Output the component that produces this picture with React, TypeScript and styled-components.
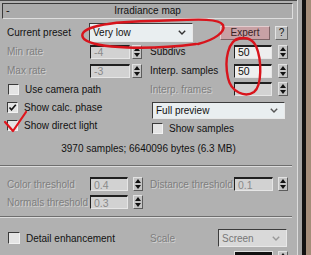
import styled, { createGlobalStyle } from "styled-components";

const Global = createGlobalStyle`
  html, body {
    margin: 0;
    padding: 0;
    background: #b1b1b1;
    overflow: hidden;
  }
  body {
    font-family: "Liberation Sans", Arial, sans-serif;
    font-size: 10px;
    color: #111;
  }
`;

function Chevron({ color = "#333" }: { color?: string }) {
  return (
    <svg width="8" height="5" viewBox="0 0 8 5">
      <polyline points="0.8,0.8 4,4 7.2,0.8" fill="none" stroke={color} strokeWidth="1.4" />
    </svg>
  );
}

function Spin({ gap }: { gap: number }) {
  return (
    <Spinner style={{ marginLeft: gap }}>
      <SpinHalf>
        <svg width="6" height="4" viewBox="0 0 6 4">
          <polygon points="3,0 6,4 0,4" fill="#111" />
        </svg>
      </SpinHalf>
      <SpinHalf>
        <svg width="6" height="4" viewBox="0 0 6 4">
          <polygon points="0,0 6,0 3,4" fill="#111" />
        </svg>
      </SpinHalf>
    </Spinner>
  );
}

function App() {
  return (
    <Screen>
      <Global />
      <Panel>
        <Header>
          <Minus>-</Minus>
          <Title>Irradiance map</Title>
        </Header>

        <PresetRow>
          <Label $w={82}>Current preset</Label>
          <Select $w={104} $h={19}>
            <span>Very low</span>
            <Chevron />
          </Select>
          <ExpertBtn>Expert</ExpertBtn>
          <HelpBtn>?</HelpBtn>
        </PresetRow>

        <Columns>
          <LeftCol>
            <Row $h={19}>
              <Label $w={83} $off>Min rate</Label>
              <Field $w={40} $off>-4</Field>
              <Spin gap={2} />
            </Row>
            <Row $h={19}>
              <Label $w={83} $off>Max rate</Label>
              <Field $w={40} $off>-3</Field>
              <Spin gap={2} />
            </Row>
            <Row $h={18}>
              <Check $pad={1} />
              <CheckText>Use camera path</CheckText>
            </Row>
            <Row $h={18}>
              <Check $pad={0}>
                <svg width="9" height="9" viewBox="0 0 9 9">
                  <polyline points="1.5,4.5 3.5,6.8 7.8,1.8" fill="none" stroke="#111" strokeWidth="1.6" />
                </svg>
              </Check>
              <CheckText>Show calc. phase</CheckText>
            </Row>
            <Row $h={19}>
              <Check $pad={0} />
              <CheckText>Show direct light</CheckText>
            </Row>
          </LeftCol>

          <RightCol>
            <Row $h={19}>
              <Label $w={84}>Subdivs</Label>
              <Field $w={38}>50</Field>
              <Spin gap={6} />
            </Row>
            <Row $h={19}>
              <Label $w={84}>Interp. samples</Label>
              <Field $w={38}>50</Field>
              <Spin gap={6} />
            </Row>
            <Row $h={18}>
              <Label $w={84} $off>Interp. frames</Label>
              <Field $w={38} $off></Field>
              <Spin gap={6} />
            </Row>
            <PreviewWrap>
              <Select $w={133} $h={17}>
                <span>Full preview</span>
                <Chevron color="#555" />
              </Select>
            </PreviewWrap>
            <Row $h={18}>
              <Check $pad={2} />
              <CheckText>Show samples</CheckText>
            </Row>
          </RightCol>
        </Columns>

        <Stats>3970 samples; 6640096 bytes (6.3 MB)</Stats>
        <Groove $top={4} />

        <Section $top={8}>
          <Row $h={18}>
            <Half>
              <Label $w={83} $off>Color threshold</Label>
              <Field $w={38} $off>0.4</Field>
              <Spin gap={5} />
            </Half>
            <Half $right>
              <Label $w={84} $off>Distance threshold</Label>
              <Field $w={39} $off>0.1</Field>
              <Spin gap={5} />
            </Half>
          </Row>
          <Row $h={18}>
            <Half>
              <Label $w={83} $off>Normals threshold</Label>
              <Field $w={38} $off>0.3</Field>
              <Spin gap={5} />
            </Half>
          </Row>
        </Section>
        <Groove $top={5} />

        <Section $top={11}>
          <Row $h={18}>
            <Half>
              <Check $pad={1} $size={12} />
              <CheckText>Detail enhancement</CheckText>
            </Half>
            <Half $right>
              <Label $w={68} $off>Scale</Label>
              <Select $w={69} $h={18} $off>
                <span>Screen</span>
                <Chevron color="#999" />
              </Select>
            </Half>
          </Row>
          <Row $h={14} $top={4}>
            <Half />
            <Half $right>
              <Label $w={84} />
              <Swatch />
              <Spin gap={5} />
            </Half>
          </Row>
        </Section>
      </Panel>
      <Edge />

      <Marks width="311" height="255" viewBox="0 0 311 255">
        <path
          d="M196 44 C150 50 96 49 84 39 C76 30 96 22 150 21 C190 20 218 17 223 25 C226 32 214 40 198 44"
          fill="none"
          stroke="#d8141c"
          strokeWidth="2.4"
          strokeLinecap="round"
        />
        <path
          d="M240 38 C228 40 224 60 228 78 C231 92 245 98 254 92 C262 86 262 60 256 46 C252 38 244 36 236 40"
          fill="none"
          stroke="#d8141c"
          strokeWidth="2.4"
          strokeLinecap="round"
        />
        <polyline
          points="5,122 13,131 26,112"
          fill="none"
          stroke="#e0141c"
          strokeWidth="2.2"
          strokeLinecap="round"
          strokeLinejoin="round"
        />
      </Marks>
    </Screen>
  );
}

const Screen = styled.div`
  position: relative;
  display: flex;
  width: 311px;
  height: 255px;
  overflow: hidden;
`;

const Panel = styled.div`
  width: 297px;
  display: flex;
  flex-direction: column;
  border-top: 1px solid #4a4a4a;
`;

const Header = styled.div`
  box-sizing: border-box;
  position: relative;
  margin: 2px 4px 0 2px;
  height: 16px;
  display: flex;
  align-items: center;
  justify-content: center;
  background: #ababab;
  border: 1px solid;
  border-color: #3a3a3a #dedede #dedede #3a3a3a;
`;

const Minus = styled.span`
  position: absolute;
  left: 3px;
  top: 0;
  font-size: 11px;
  line-height: 13px;
`;

const Title = styled.span`
  font-size: 10px;
  line-height: 14px;
`;

const PresetRow = styled.div`
  display: flex;
  align-items: center;
  height: 20px;
  margin-top: 4px;
  padding-left: 7px;
`;

const Label = styled.span<{ $w?: number; $off?: boolean }>`
  flex: none;
  width: ${(p) => p.$w ?? 80}px;
  white-space: nowrap;
  color: ${(p) => (p.$off ? "#7e7e7e" : "#111")};
  text-shadow: ${(p) => (p.$off ? "1px 1px 0 #d2d2d2" : "none")};
`;

const Select = styled.div<{ $w: number; $h: number; $off?: boolean }>`
  box-sizing: border-box;
  flex: none;
  width: ${(p) => p.$w}px;
  height: ${(p) => p.$h}px;
  display: flex;
  align-items: center;
  justify-content: space-between;
  padding: 0 6px 0 3px;
  background: ${(p) => (p.$off ? "#d9d9d9" : "#e9eef0")};
  color: ${(p) => (p.$off ? "#777" : "#111")};
  border: 1px solid;
  border-color: #3c3c3c #e8e8e8 #e8e8e8 #3c3c3c;
`;

const ExpertBtn = styled.div`
  box-sizing: border-box;
  flex: none;
  width: 50px;
  height: 14px;
  margin-left: 27px;
  display: flex;
  align-items: center;
  justify-content: center;
  background: #c8a1a5;
  color: #3a2224;
  border: 1px solid;
  border-color: #e3cdcf #7d6366 #7d6366 #e3cdcf;
`;

const HelpBtn = styled.div`
  box-sizing: border-box;
  flex: none;
  width: 13px;
  height: 14px;
  margin-left: 5px;
  display: flex;
  align-items: center;
  justify-content: center;
  background: #bdbdbd;
  border: 1px solid;
  border-color: #e4e4e4 #6a6a6a #6a6a6a #e4e4e4;
`;

const Columns = styled.div`
  display: flex;
`;

const LeftCol = styled.div`
  width: 143px;
  padding-left: 7px;
  display: flex;
  flex-direction: column;
`;

const RightCol = styled.div`
  display: flex;
  flex-direction: column;
`;

const Row = styled.div<{ $h: number; $top?: number }>`
  display: flex;
  align-items: center;
  height: ${(p) => p.$h}px;
  margin-top: ${(p) => p.$top ?? 0}px;
`;

const Half = styled.div<{ $right?: boolean }>`
  flex: none;
  width: ${(p) => (p.$right ? 147 : 143)}px;
  padding-left: ${(p) => (p.$right ? 0 : 7)}px;
  display: flex;
  align-items: center;
`;

const Field = styled.div<{ $w: number; $off?: boolean }>`
  box-sizing: border-box;
  flex: none;
  width: ${(p) => p.$w}px;
  height: 14px;
  padding-left: 3px;
  display: flex;
  align-items: center;
  font-size: 10.5px;
  background: ${(p) => (p.$off ? "#d2d2d2" : "#eeeeee")};
  color: ${(p) => (p.$off ? "#8a8a8a" : "#111")};
  border: 1px solid;
  border-top-width: 2px;
  border-color: #202020 #e6e6e6 #e6e6e6 #202020;
`;

const Swatch = styled.div`
  flex: none;
  width: 39px;
  height: 14px;
  background: #111;
  border: 1px solid #e0e0e0;
  box-sizing: border-box;
`;

const Spinner = styled.div`
  box-sizing: border-box;
  flex: none;
  width: 10px;
  height: 14px;
  display: flex;
  flex-direction: column;
  background: #c4c4c4;
  border: 1px solid;
  border-color: #e2e2e2 #5c5c5c #5c5c5c #e2e2e2;
`;

const SpinHalf = styled.div`
  flex: 1;
  display: flex;
  align-items: center;
  justify-content: center;
`;

const Check = styled.div<{ $pad: number; $size?: number }>`
  box-sizing: border-box;
  flex: none;
  width: ${(p) => p.$size ?? 11}px;
  height: ${(p) => p.$size ?? 11}px;
  margin-left: ${(p) => p.$pad}px;
  display: flex;
  align-items: center;
  justify-content: center;
  background: #e4e4e4;
  border: 1px solid;
  border-color: #3a3a3a #f2f2f2 #f2f2f2 #3a3a3a;
`;

const CheckText = styled.span`
  margin-left: 6px;
  white-space: nowrap;
`;

const PreviewWrap = styled.div`
  height: 21px;
  padding: 4px 0 0 2px;
  box-sizing: border-box;
`;

const Stats = styled.div`
  height: 24px;
  line-height: 24px;
  text-align: center;
`;

const Groove = styled.div<{ $top: number }>`
  margin-top: ${(p) => p.$top}px;
  width: 292px;
  height: 0;
  border-top: 1px solid #6e6e6e;
  border-bottom: 1px solid #dcdcdc;
`;

const Section = styled.div<{ $top: number }>`
  display: flex;
  flex-direction: column;
  padding-top: ${(p) => p.$top}px;
`;

const Edge = styled.div`
  flex: none;
  width: 14px;
  background: linear-gradient(
    to right,
    #dcdcdc 0 1px,
    #a4a4a4 1px 5px,
    #111 5px 9px,
    #a48d7a 9px
  );
`;

const Marks = styled.svg`
  position: absolute;
  left: 0;
  top: 0;
  pointer-events: none;
`;

export default App;
